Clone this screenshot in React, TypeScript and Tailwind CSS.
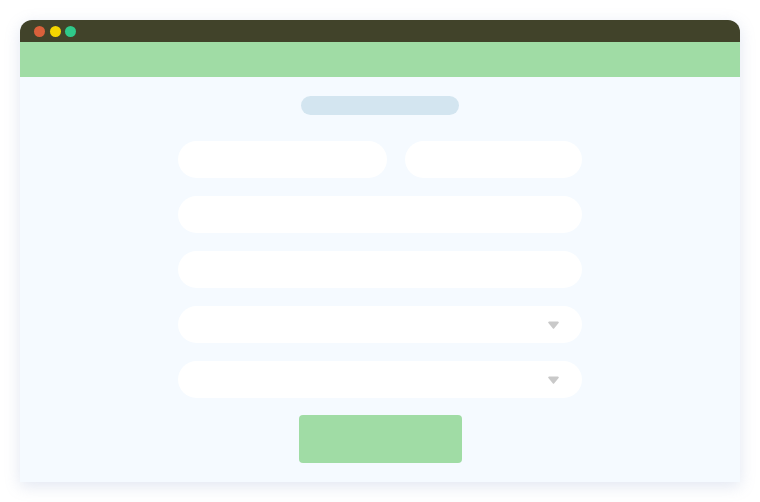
const Caret = () => (
  <svg width="11" height="8" viewBox="0 0 11 8" aria-hidden>
    <path d="M1.2 0.5h8.6a1 1 0 0 1 .8 1.6L6.3 7.2a1 1 0 0 1-1.6 0L.4 2.1A1 1 0 0 1 1.2.5z" fill="#c9c9c9" />
  </svg>
);

function Field({ className = "", select = false }: { className?: string; select?: boolean }) {
  return (
    <div className={`flex h-[37px] items-center justify-end rounded-full bg-white pr-[23px] ${className}`}>
      {select && <Caret />}
    </div>
  );
}

export default function App() {
  return (
    <div className="flex h-[502px] w-[760px] items-start bg-white pl-5 pt-5 font-['Liberation_Sans',sans-serif]">
      <div className="flex h-[462px] w-[720px] flex-col overflow-hidden rounded-t-[12px] bg-[#f5faff] shadow-[0_4px_16px_rgba(120,140,190,0.22)]">
        <div className="flex h-[22px] items-center gap-[4.5px] bg-[#41432a] pl-[14px] pt-px">
          <span className="size-[11px] rounded-full bg-[#d9603b]" />
          <span className="size-[11px] rounded-full bg-[#f4d600]" />
          <span className="size-[11px] rounded-full bg-[#2fc98a]" />
        </div>
        <div className="h-[35px] bg-[#a0dca5]" />
        <div className="flex flex-col items-center pt-[19px]">
          <div className="h-[19px] w-[158px] rounded-full bg-[#d3e5f0]" />
          <div className="mt-[26px] flex w-[404px] flex-col gap-[18px]">
            <div className="flex gap-[18px]">
              <Field className="w-[209px]" />
              <Field className="flex-1" />
            </div>
            <Field />
            <Field />
            <Field select />
            <Field select />
          </div>
          <button className="mt-[17px] h-[48px] w-[163px] rounded-[4px] bg-[#a0dca5]" />
        </div>
      </div>
    </div>
  );
}
